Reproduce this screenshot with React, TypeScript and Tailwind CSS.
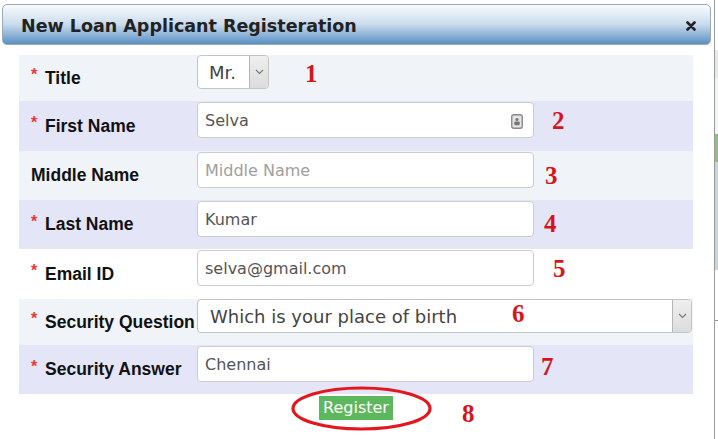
import React from "react";

const LBL = { fontFamily: '"Liberation Sans", Arial, sans-serif' };
const DV = { fontFamily: '"DejaVu Sans", Verdana, sans-serif' };
const TM = { fontFamily: '"Liberation Serif", "Times New Roman", serif' };

function Chevron() {
  return (
    <svg width="9" height="6" viewBox="0 0 9 6">
      <path d="M1 1 L4.5 4.5 L8 1" fill="none" stroke="#777" strokeWidth="1.1" />
    </svg>
  );
}

function DropBtn() {
  return (
    <div className="w-[19px] h-full flex items-center justify-center bg-gradient-to-b from-[#efefef] to-[#dcdcdc] border-l border-[#b5b5b5] rounded-r-[3px]">
      <Chevron />
    </div>
  );
}

function Row({
  label,
  req = true,
  bg,
  tall = false,
  children,
}: {
  label: string;
  req?: boolean;
  bg: string;
  tall?: boolean;
  children: React.ReactNode;
}) {
  return (
    <div className={`flex ${bg}`}>
      <div className="w-[178px] pl-[12px] flex items-center text-[17.5px] font-bold text-[#111]" style={LBL}>
        {req && <span className="inline-block w-[14px] text-[16px] text-[#e53935] -translate-y-[3px]">*</span>}
        <span className="whitespace-nowrap">{label}</span>
      </div>
      <div className={tall ? "pt-px pb-[13px]" : "pt-px pb-3"}>{children}</div>
    </div>
  );
}

function TextInput({ value, placeholder, icon }: { value?: string; placeholder?: string; icon?: boolean }) {
  return (
    <div
      className="w-[337px] h-[36px] bg-white border border-[#cccccc] rounded-[4px] flex items-center pl-[7px] pr-[10px] pt-[2px] text-[16px]"
      style={DV}
    >
      {value ? (
        <span className="text-[#555]">{value}</span>
      ) : (
        <span className="text-[#a0a0a0]">{placeholder}</span>
      )}
      {icon && (
        <svg className="ml-auto" width="12" height="15" viewBox="0 0 12 15">
          <rect x="0.75" y="0.75" width="10.5" height="13.5" rx="2" fill="#e4e4e4" stroke="#8a8a8a" strokeWidth="1.4" />
          <circle cx="6" cy="5.5" r="1.6" fill="#777" />
          <rect x="3.3" y="7.6" width="5.4" height="3.6" rx="1" fill="#777" />
        </svg>
      )}
    </div>
  );
}

const nums: [string, number, number][] = [
  ["1", 305, 61],
  ["2", 552, 108],
  ["3", 545, 163],
  ["4", 544, 211],
  ["5", 553, 256],
  ["6", 512, 301],
  ["7", 541, 354],
  ["8", 462, 401],
];

export default function App() {
  return (
    <div className="relative w-[718px] h-[439px] bg-white overflow-hidden flex">
      <div className="w-[712px] flex flex-col">
        {/* header */}
        <div className="mt-[4px] ml-[2px] w-[709px] h-[41px] rounded-[5px] border border-[#9aa9b8] bg-gradient-to-b from-[#fbfcfe] via-[#c9dbec] to-[#5a8fc3] flex items-center pl-[18px] pr-[14px] pt-[3px]">
          <span className="text-[17.5px] font-bold text-[#222]" style={{ fontFamily: '"DejaVu Sans", Tahoma, sans-serif' }}>
            New Loan Applicant Registeration
          </span>
          <svg className="ml-auto" width="10" height="10" viewBox="0 0 10 10">
            <path d="M1.5 1.5 L8.5 8.5 M8.5 1.5 L1.5 8.5" stroke="#222" strokeWidth="2.6" strokeLinecap="round" />
          </svg>
        </div>

        {/* form */}
        <div className="mt-[10px] ml-[19px] w-[674px] flex flex-col">
          <Row label="Title" bg="bg-[#f0f3f8]">
            <div className="w-[72px] h-[34px] -mt-px bg-white border border-[#c4c4c4] rounded-[4px] flex items-center text-[18px] text-[#444]" style={DV}>
              <span className="pl-[11px] flex-1">Mr.</span>
              <DropBtn />
            </div>
          </Row>
          <Row label="First Name" bg="bg-[#e5e5f8]" tall>
            <TextInput value="Selva" icon />
          </Row>
          <Row label="Middle Name" req={false} bg="bg-[#f0f3f8]">
            <TextInput placeholder="Middle Name" />
          </Row>
          <Row label="Last Name" bg="bg-[#e5e5f8]">
            <TextInput value="Kumar" />
          </Row>
          <Row label="Email ID" bg="bg-white" tall>
            <TextInput value="selva@gmail.com" />
          </Row>
          <Row label="Security Question" bg="bg-[#f0f3f8]">
            <div className="w-[495px] h-[34px] -mt-px bg-white border border-[#c4c4c4] rounded-[4px] flex items-center text-[18px] text-[#444]" style={DV}>
              <span className="pl-[12px] flex-1">Which is your place of birth</span>
              <DropBtn />
            </div>
          </Row>
          <Row label="Security Answer" bg="bg-[#e5e5f8]">
            <TextInput value="Chennai" />
          </Row>
        </div>

        {/* register */}
        <div className="flex justify-center mt-[2px]">
          <div className="w-[74px] h-[24px] bg-[#5cb85c] text-white text-[16px] flex items-center justify-center" style={DV}>
            Register
          </div>
        </div>
      </div>

      {/* background page strip */}
      <div className="w-[6px] flex">
        <div className="w-[2px]" />
        <div className="w-px bg-[#9a9a9a]" />
        <div className="flex-1 flex flex-col">
          <div className="h-[50px] bg-white" />
          <div className="h-[28px] bg-[#e6e8ea]" />
          <div className="h-[56px] bg-[#f2f4f5]" />
          <div className="h-[28px] bg-[#8fbd8c]" />
          <div className="h-[108px] bg-[#c6d6dd]" />
          <div className="h-[50px] bg-white" />
          <div className="h-px bg-[#999]" />
          <div className="flex-1 bg-white" />
        </div>
      </div>

      {/* annotations */}
      <svg className="absolute left-[290px] top-[385px]" width="143" height="47" viewBox="0 0 143 47">
        <ellipse cx="71.5" cy="23.5" rx="68.5" ry="20.5" fill="none" stroke="#e3161e" strokeWidth="3.2" />
      </svg>
      {nums.map(([n, x, y]) => (
        <span
          key={n}
          className="absolute text-[25px] leading-[25px] font-bold text-[#d4161c]"
          style={{ ...TM, left: x, top: y }}
        >
          {n}
        </span>
      ))}
    </div>
  );
}
